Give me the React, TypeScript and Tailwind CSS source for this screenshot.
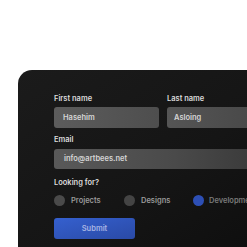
export default function App() {
  return (
    <div
      className="w-[247px] h-[247px] overflow-hidden bg-white pt-[70px] pl-[18px]"
      style={{ fontFamily: "Inter, 'Noto Sans', sans-serif" }}
    >
      <div className="w-[300px] h-[200px] rounded-tl-[14px] bg-gradient-to-br from-[#1b1b1b] via-[#151515] to-[#0c0c0c] pl-[36px] pt-[24px]">
        <div className="flex gap-[8px]">
          <div className="flex flex-col w-[105px]">
            <span className="text-[7.5px] leading-[10px] font-semibold text-[#dcdcdc]">First name</span>
            <div className="mt-[3px] h-[21px] rounded-[3px] bg-gradient-to-r from-[#5c5c5c] to-[#4e4e4e] flex items-center pl-[9px] text-[7.5px] font-semibold text-[#d6d6d6]">
              Hasehim
            </div>
          </div>
          <div className="flex flex-col w-[120px]">
            <span className="text-[7.5px] leading-[10px] font-semibold text-[#dcdcdc]">Last name</span>
            <div className="mt-[3px] h-[21px] rounded-[3px] bg-gradient-to-r from-[#555] to-[#444] flex items-center pl-[7px] text-[7.5px] font-semibold text-[#d6d6d6]">
              Asloing
            </div>
          </div>
        </div>
        <div className="flex flex-col mt-[7px] w-[240px]">
          <span className="text-[7.5px] leading-[10px] font-semibold text-[#dcdcdc]">Email</span>
          <div className="mt-[4px] h-[20px] rounded-[3px] bg-gradient-to-r from-[#595959] via-[#4a4a4a] to-[#333] flex items-center pl-[10px] text-[7.5px] font-semibold text-[#d6d6d6]">
            info@artbees.net
          </div>
        </div>
        <div className="mt-[9px] text-[7.5px] leading-[10px] font-semibold text-[#dcdcdc]">Looking for?</div>
        <div className="mt-[7px] flex items-center text-[7.5px] font-semibold text-[#9a9a9a]">
          <div className="flex items-center w-[70px]">
            <span className="w-[11px] h-[11px] rounded-full bg-[#4a4a4a]" />
            <span className="ml-[6px]">Projects</span>
          </div>
          <div className="flex items-center w-[69px]">
            <span className="w-[11px] h-[11px] rounded-full bg-[#444]" />
            <span className="ml-[6px]">Designs</span>
          </div>
          <div className="flex items-center">
            <span className="w-[11px] h-[11px] rounded-full bg-[#2d4fb5]" />
            <span className="ml-[5px] text-[#7a7a7a]">Development</span>
          </div>
        </div>
        <div className="mt-[12px] w-[81px] h-[21px] rounded-[3px] bg-gradient-to-br from-[#3560cf] to-[#2a4aa6] flex items-center justify-center text-[7.5px] font-semibold text-[#a7b4e4]">
          Submit
        </div>
      </div>
    </div>
  );
}
